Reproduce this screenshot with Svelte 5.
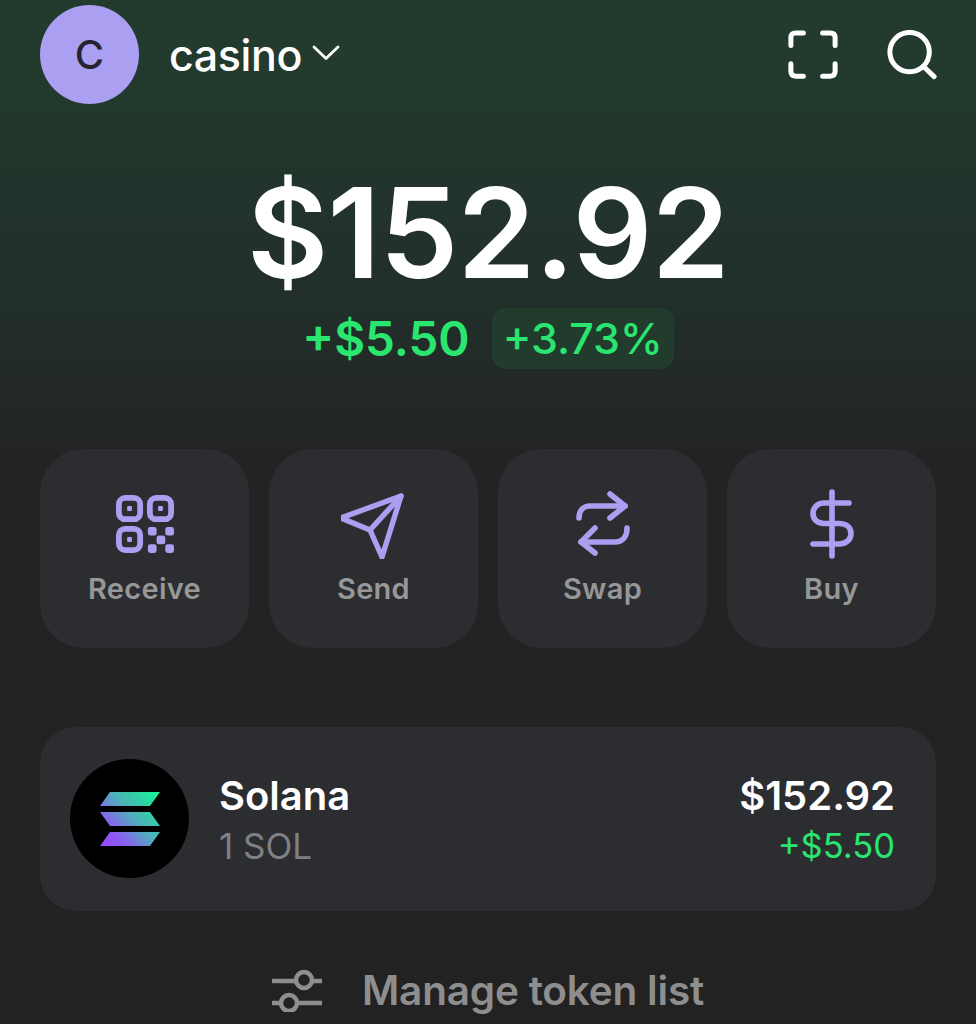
<script>
  const actions = ["Receive", "Send", "Swap", "Buy"];
</script>

<main class="wallet">
  <header class="topbar">
    <div class="account">
      <div class="avatar">C</div>
      <span class="name">casino</span>
      <svg class="chevron" width="30" height="20" viewBox="0 0 30 20" fill="none" stroke="#fff" stroke-width="2.8" stroke-linecap="round" stroke-linejoin="round">
        <path d="M3 4 L15 15.5 L27 4" />
      </svg>
    </div>
    <div class="tools">
      <svg width="50" height="50" viewBox="0 0 52 52" fill="none" stroke="#fff" stroke-width="5.2" stroke-linecap="round">
        <path d="M3 16 V8 Q3 3 8 3 H16" />
        <path d="M36 3 H44 Q49 3 49 8 V16" />
        <path d="M3 35 V43 Q3 48 8 48 H16" />
        <path d="M49 35 V43 Q49 48 44 48 H36" />
      </svg>
      <svg width="50" height="50" viewBox="0 0 52 52" fill="none" stroke="#fff" stroke-width="5.2" stroke-linecap="round">
        <circle cx="23.5" cy="23" r="20.5" />
        <path d="M38 38 L49 48.5" />
      </svg>
    </div>
  </header>

  <section class="balance">
    <div class="total">$152.92</div>
    <div class="change">
      <span class="delta">+$5.50</span>
      <span class="pct">+3.73%</span>
    </div>
  </section>

  <section class="actions">
    {#each actions as action}
      <div class="action">
        {#if action === "Receive"}
          <svg width="58" height="58" viewBox="0 0 60 60" fill="none" stroke="#ab9ff2" stroke-width="6">
            <rect x="3" y="3" width="22" height="22" rx="6.5" />
            <rect x="35" y="3" width="22" height="22" rx="6.5" />
            <rect x="3" y="35" width="22" height="22" rx="6.5" />
            <g fill="#ab9ff2" stroke="none">
              <rect x="11.5" y="11.5" width="5" height="5" rx="1" />
              <rect x="43.5" y="11.5" width="5" height="5" rx="1" />
              <rect x="11.5" y="43.5" width="5" height="5" rx="1" />
              <rect x="33" y="33" width="9" height="9" rx="2.5" />
              <rect x="51" y="33" width="9" height="9" rx="2.5" />
              <rect x="42" y="42" width="9" height="9" rx="2.5" />
              <rect x="33" y="51" width="9" height="9" rx="2.5" />
              <rect x="51" y="51" width="9" height="9" rx="2.5" />
            </g>
          </svg>
        {:else if action === "Send"}
          <svg width="66" height="66" viewBox="3 -2 66 66" fill="none" stroke="#ab9ff2" stroke-width="5.4" stroke-linecap="round" stroke-linejoin="round">
            <path d="M63 3 L3 25 L32 37 L44 64 Z" />
            <path d="M63 3 L32 37" />
          </svg>
        {:else if action === "Swap"}
          <svg width="56" height="66" viewBox="0 0 56 66" fill="none" stroke="#ab9ff2" stroke-width="5.6" stroke-linecap="round" stroke-linejoin="round">
            <path d="M4 27 C4 19 9 15 15 15 H50" />
            <path d="M35 3 L50 15 L35 27" />
            <path d="M52 37 C52 46 47 51 40 51 H6" />
            <path d="M20 37 L6 51 L20 62" />
          </svg>
        {:else}
          <svg width="44" height="70" viewBox="0 0 44 70" fill="none" stroke="#ab9ff2" stroke-width="5.6" stroke-linecap="round" stroke-linejoin="round">
            <path d="M22 3 V67" />
            <path d="M39 14 H14 C7 14 3 19 3 24.5 C3 30 7 34.5 14 34.5 H29 C37 34.5 41 39 41 44.5 C41 50 37 55 29 55 H3" />
          </svg>
        {/if}
        <span class="action-label">{action}</span>
      </div>
    {/each}
  </section>

  <section class="token">
    <div class="token-logo">
      <svg width="60" height="54" viewBox="0 0 60 54">
        <defs>
          <linearGradient id="sol" x1="0" y1="54" x2="60" y2="0" gradientUnits="userSpaceOnUse">
            <stop offset="0" stop-color="#9945ff" />
            <stop offset="0.25" stop-color="#8a5ef0" />
            <stop offset="0.55" stop-color="#4fb0bc" />
            <stop offset="0.8" stop-color="#2ad8a0" />
            <stop offset="1" stop-color="#19fb9b" />
          </linearGradient>
        </defs>
        <path fill="url(#sol)" d="M10 0 H60 L50 14 H0 Z" />
        <path fill="url(#sol)" d="M0 20 H50 L60 34 H10 Z" />
        <path fill="url(#sol)" d="M10 40 H60 L50 54 H0 Z" />
      </svg>
    </div>
    <div class="token-info">
      <div class="token-name">Solana</div>
      <div class="token-amount">1 SOL</div>
    </div>
    <div class="token-values">
      <div class="token-usd">$152.92</div>
      <div class="token-change">+$5.50</div>
    </div>
  </section>

  <footer class="manage">
    <svg width="50" height="42" viewBox="0 0 50 42" fill="none" stroke="#8e8e8e" stroke-width="4.5" stroke-linecap="round">
      <path d="M1 11 H23 M41 11 H49" />
      <circle cx="32" cy="10" r="8" />
      <path d="M1 33 H8 M26 33 H49" />
      <circle cx="17" cy="33" r="8" />
    </svg>
    <span>Manage token list</span>
  </footer>
</main>

<style>
  :global(body) {
    margin: 0;
    background: #222222;
  }

  .wallet {
    height: 1024px;
    overflow: hidden;
    box-sizing: border-box;
    padding: 5px 40px 0;
    font-family: Inter, "Liberation Sans", sans-serif;
    background: linear-gradient(180deg, #223b2e 0, #223b2e 60px, #222d29 330px, #222323 470px, #222222 100%);
    color: #fff;
  }

  .topbar {
    display: flex;
    justify-content: space-between;
    align-items: center;
    height: 99px;
  }

  .account {
    display: flex;
    align-items: center;
  }

  .avatar {
    width: 99px;
    height: 99px;
    border-radius: 50%;
    background: #ab9ff2;
    color: #272333;
    font-size: 40px;
    font-weight: 500;
    display: flex;
    align-items: center;
    justify-content: center;
  }

  .name {
    margin-left: 30px;
    font-size: 43px;
    font-weight: 500;
    letter-spacing: -0.4px;
  }

  .chevron {
    margin-left: 9px;
    margin-top: -3px;
  }

  .tools {
    display: flex;
    gap: 49px;
    margin-right: -1px;
  }

  .balance {
    display: flex;
    flex-direction: column;
    align-items: center;
    margin-top: 59px;
  }

  .total {
    font-size: 125px;
    font-weight: 600;
    line-height: 140px;
    letter-spacing: -0.7px;
  }

  .change {
    display: flex;
    align-items: center;
    gap: 22px;
    margin-top: 5px;
    color: #2ae56f;
  }

  .delta {
    font-size: 47.5px;
    font-weight: 600;
  }

  .pct {
    font-size: 43px;
    font-weight: 500;
    height: 61px;
    line-height: 61px;
    padding: 0 11px;
    border-radius: 14px;
    background: #213c2d;
  }

  .actions {
    display: grid;
    grid-template-columns: repeat(4, 1fr);
    gap: 20px;
    margin-top: 80px;
  }

  .action {
    height: 199px;
    border-radius: 44px;
    background: #2c2d31;
    display: flex;
    flex-direction: column;
    align-items: center;
    padding-top: 40px;
    box-sizing: border-box;
    position: relative;
  }

  .action svg {
    height: 70px;
    display: block;
  }

  .action-label {
    position: absolute;
    top: 122px;
    font-size: 29px;
    font-weight: 600;
    line-height: 36px;
    letter-spacing: 0.3px;
    color: #979797;
  }

  .token {
    display: flex;
    align-items: center;
    height: 184px;
    margin-top: 79px;
    padding: 0 41px 0 30px;
    border-radius: 36px;
    background: #2c2d31;
  }

  .token-logo {
    width: 119px;
    height: 119px;
    margin-top: -1px;
    border-radius: 50%;
    background: #000;
    display: flex;
    align-items: center;
    justify-content: center;
    flex-shrink: 0;
  }

  .token-info {
    margin-left: 30px;
    flex: 1;
    padding-top: 4px;
  }

  .token-values {
    text-align: right;
    padding-top: 4px;
  }

  .token-name,
  .token-usd {
    font-size: 40px;
    font-weight: 600;
    line-height: 46px;
  }

  .token-amount,
  .token-change {
    font-size: 35px;
    line-height: 46px;
    margin-top: 4px;
  }

  .token-amount {
    color: #7f8084;
  }

  .token-change {
    font-size: 34.5px;
    color: #2ae56f;
  }

  .manage {
    display: flex;
    align-items: center;
    justify-content: center;
    gap: 40px;
    margin-top: 55px;
    font-size: 40.5px;
    font-weight: 600;
    letter-spacing: -0.2px;
    color: #8e8e8e;
  }
</style>
